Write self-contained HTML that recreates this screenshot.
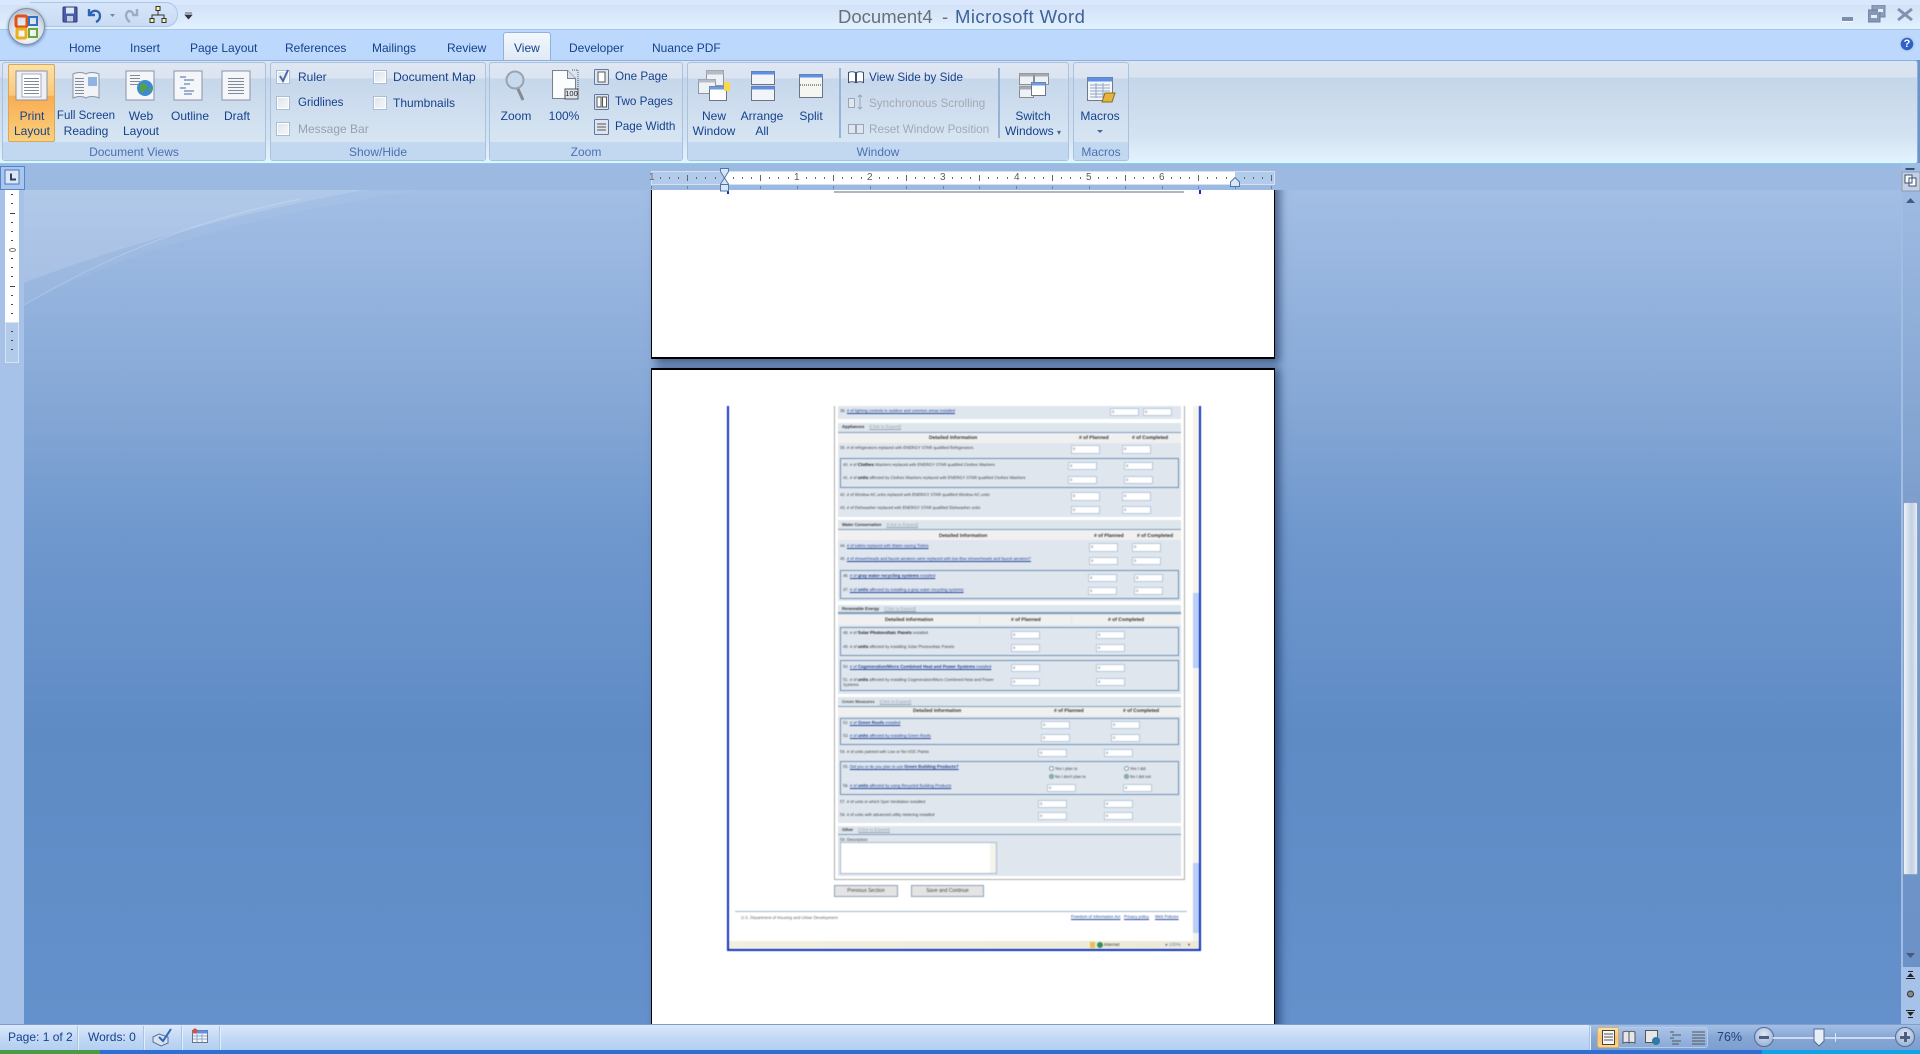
<!DOCTYPE html>
<html><head><meta charset="utf-8"><title>Document4 - Microsoft Word</title>
<style>
html,body{margin:0;padding:0;width:1920px;height:1054px;overflow:hidden;background:#6a93c9}
*{box-sizing:border-box}
body{font-family:"Liberation Sans",sans-serif;position:relative}
.a{position:absolute}
.r{position:absolute;font-size:12px;line-height:14px;color:#15428b;white-space:nowrap}
.c{transform:translateX(-50%);text-align:center}
.d{color:#a3a9b3}
.gl{position:absolute;left:0;right:0;bottom:0;height:18px;background:#c2d8f0;color:#4c6fb0;font-size:12px;line-height:20px;text-align:center;border-radius:0 0 3px 3px}
.g{position:absolute;top:62px;height:99px;border:1px solid #a8c2e0;border-radius:3px;background:linear-gradient(#dee6f2 0,#dbe4f1 15px,#c6d7eb 16px,#d8e6f3 82px)}
.cb{position:absolute;width:14px;height:14px;border:1px solid #a9bdd6;background:linear-gradient(135deg,#dfe4ea,#f6f8fa);box-shadow:inset 0 0 0 1px #fff}
.sep{position:absolute;width:2px;background:#95b3d8}
.f{position:absolute;font-size:4.1px;line-height:6px;color:#444;white-space:nowrap;text-rendering:geometricPrecision}
.f b{color:#222;font-size:4.4px}
.f u{color:#1f4296}
.h{position:absolute;font-size:4.2px;line-height:6px;color:#333;font-weight:bold;white-space:nowrap;text-rendering:geometricPrecision}
.h i{font-style:normal;font-weight:normal;color:#99a2ae;text-decoration:underline;margin-left:4px}
.tt{position:absolute;font-size:5px;line-height:6px;color:#333;font-weight:bold;white-space:nowrap;text-rendering:geometricPrecision}
.i{position:absolute;width:29px;height:8px;background:#fff;border:1px solid #b5c8da;font-size:4px;line-height:6px;color:#555;padding-left:1px}
.s{position:absolute;background:#dfe6ee;left:838px;width:343px}
.sh{position:absolute;left:838px;width:343px;height:10px;background:#dde5ed;border-bottom:1px solid #7f9db9}
.th{position:absolute;left:838px;width:343px;height:10px;background:#f0f0f0}
.bx{position:absolute;left:840px;width:339px;border:1px solid #6f90b4}
.stsep{position:absolute;top:1026px;height:24px;width:1px;background:#a9c3e3;box-shadow:1px 0 0 #e3eefb}
.rd{position:absolute;width:5px;height:5px;border-radius:50%;background:#fff;border:1px solid #7d99ad}
.rd.k{background:#7fc08a}
</style></head><body>

<!-- document background -->
<div class="a" style="left:0;top:190px;width:1920px;height:834px;background:linear-gradient(#a2bee5 0,#86a8d6 25%,#6e97cd 42%,#5f8bc5 65%,#6490cb 100%)"></div>
<svg class="a" style="left:24px;top:190px" width="500" height="130" viewBox="0 0 500 130">
<path d="M0 0H340Q150 35 0 93Z" fill="#fff" opacity=".17"/>
<path d="M0 93Q150 35 340 0H400Q150 35 0 115Z" fill="#fff" opacity=".05"/>
<path d="M0 115Q130 38 276 9" fill="none" stroke="#fff" stroke-width="1" opacity=".2"/>
</svg>
<div class="a" style="left:0;top:190px;width:24px;height:834px;background:#a6c2e9"></div>

<!-- pages -->
<div class="a" style="left:651px;top:180px;width:624px;height:179px;background:#fff;border:1px solid #000;border-width:0 1px 2px 1px;box-shadow:5px 4px 8px rgba(10,30,70,.55)"></div>
<div class="a" style="left:651px;top:368px;width:624px;height:700px;background:#fff;border:1px solid #000;border-top-width:2px;box-shadow:5px 0 8px rgba(10,30,70,.55)"></div>
<div class="a" style="left:727px;top:190px;width:2px;height:4px;background:#1133bb"></div>
<div class="a" style="left:1199px;top:190px;width:2px;height:4px;background:#1133bb"></div>
<div class="a" style="left:834px;top:191px;width:350px;height:2px;background:#aeb6c0"></div>

<!-- embedded screenshot -->
<div class="a" style="left:0;top:0;width:1920px;height:1054px;filter:blur(.4px)">
<div class="a" style="left:727px;top:406px;width:2px;height:545px;background:#1133bb"></div>
<div class="a" style="left:1199px;top:406px;width:2px;height:545px;background:#1133bb"></div>
<div class="a" style="left:727px;top:949px;width:474px;height:2px;background:#1133bb"></div>
<div class="a" style="left:1193px;top:406px;width:6px;height:535px;background:#f4f3ec"></div>
<div class="a" style="left:1193px;top:593px;width:6px;height:75px;background:#b9cff5"></div>
<div class="a" style="left:1193px;top:863px;width:6px;height:70px;background:#b9cff5"></div>
<div class="a" style="left:729px;top:941px;width:470px;height:8px;background:linear-gradient(90deg,#f2efe0,#ece9d8)"></div>
<div class="a" style="left:1090px;top:942px;width:5px;height:6px;background:#e8c050"></div>
<div class="a" style="left:1097px;top:942px;width:6px;height:6px;border-radius:50%;background:#3b8a5a"></div>
<div class="f" style="left:1104px;top:942px;color:#333;font-size:4.600px">Internet</div>
<div class="f" style="left:1165px;top:942px;color:#5a7ab0;font-size:4.600px">&#9679; 100%</div>
<div class="f" style="left:1188px;top:942px;color:#333">&#9662;</div>

<div class="a" style="left:834px;top:406px;width:351px;height:474px;border:1px solid #aaa;border-top:0"></div>

<!-- top sliver -->
<div class="s" style="top:406px;height:13px"></div>
<div class="f" style="left:840px;top:408px">38. <u># of lighting controls in outdoor and common areas installed</u></div>
<div class="i" style="left:1110px;top:408px">0</div><div class="i" style="left:1143px;top:408px">0</div>

<!-- Appliances -->
<div class="s" style="top:423px;height:94px"></div><div class="sh" style="top:423px"></div>
<div class="h" style="left:842px;top:424px">Appliances <i>[Click to Expand]</i></div>
<div class="th" style="top:433px"></div>
<div class="tt" style="left:929px;top:435px">Detailed Information</div>
<div class="tt" style="left:1079px;top:435px"># of Planned</div><div class="tt" style="left:1132px;top:435px"># of Completed</div>
<div class="f" style="left:840px;top:445px">39. # of refrigerators replaced with ENERGY STAR qualified Refrigerators</div>
<div class="i" style="left:1071px;top:445px;height:9px">0</div><div class="i" style="left:1122px;top:445px;height:9px">0</div>
<div class="bx" style="top:458px;height:30px"></div>
<div class="f" style="left:843px;top:462px">40. # of <b>Clothes</b> Washers replaced with ENERGY STAR qualified Clothes Washers</div>
<div class="i" style="left:1068px;top:462px">0</div><div class="i" style="left:1124px;top:462px">0</div>
<div class="f" style="left:843px;top:475px">41. # of <b>units</b> affected by Clothes Washers replaced with ENERGY STAR qualified Clothes Washers</div>
<div class="i" style="left:1068px;top:476px">0</div><div class="i" style="left:1124px;top:476px">0</div>
<div class="f" style="left:840px;top:492px">42. # of Window AC units replaced with ENERGY STAR qualified Window AC units</div>
<div class="i" style="left:1071px;top:492px;height:9px">0</div><div class="i" style="left:1122px;top:492px;height:9px">0</div>
<div class="f" style="left:840px;top:505px">43. # of Dishwasher replaced with ENERGY STAR qualified Dishwasher units</div>
<div class="i" style="left:1071px;top:506px">0</div><div class="i" style="left:1122px;top:506px">0</div>

<!-- Water -->
<div class="s" style="top:520px;height:81px"></div><div class="sh" style="top:520px"></div>
<div class="h" style="left:842px;top:522px">Water Conservation <i>[Click to Expand]</i></div>
<div class="th" style="top:530px"></div>
<div class="tt" style="left:939px;top:533px">Detailed Information</div>
<div class="tt" style="left:1094px;top:533px"># of Planned</div><div class="tt" style="left:1137px;top:533px"># of Completed</div>
<div class="f" style="left:840px;top:543px">44. <u># of toilets replaced with Water-saving Toilets</u></div>
<div class="i" style="left:1089px;top:543px;height:9px">0</div><div class="i" style="left:1132px;top:543px;height:9px">0</div>
<div class="f" style="left:840px;top:556px">45. <u># of showerheads and faucet aerators were replaced with low-flow showerheads and faucet aerators?</u></div>
<div class="i" style="left:1089px;top:557px">0</div><div class="i" style="left:1132px;top:557px">0</div>
<div class="bx" style="top:570px;height:29px"></div>
<div class="f" style="left:843px;top:573px">46. <u># of <b style="color:#1c3f8c">gray water recycling systems</b> installed</u></div>
<div class="i" style="left:1088px;top:574px">0</div><div class="i" style="left:1134px;top:574px">0</div>
<div class="f" style="left:843px;top:587px">47. <u># of <b style="color:#1c3f8c">units</b> affected by installing a gray water recycling systems</u></div>
<div class="i" style="left:1088px;top:587px">0</div><div class="i" style="left:1134px;top:587px">0</div>

<!-- Renewable -->
<div class="s" style="top:605px;height:89px"></div><div class="sh" style="top:605px;height:9px;border-bottom-width:2px"></div>
<div class="h" style="left:842px;top:606px">Renewable Energy <i>[Click to Expand]</i></div>
<div class="th" style="top:615px"></div>
<div class="a" style="left:979px;top:615px;width:1px;height:10px;background:#e4e4e4"></div><div class="a" style="left:1071px;top:615px;width:1px;height:10px;background:#e4e4e4"></div>
<div class="tt" style="left:885px;top:617px">Detailed Information</div>
<div class="tt" style="left:1011px;top:617px"># of Planned</div><div class="tt" style="left:1108px;top:617px"># of Completed</div>
<div class="bx" style="top:627px;height:29px"></div>
<div class="f" style="left:843px;top:630px">48. # of <b>Solar Photovoltaic Panels</b> installed</div>
<div class="i" style="left:1011px;top:631px">0</div><div class="i" style="left:1096px;top:631px">0</div>
<div class="f" style="left:843px;top:644px">49. # of <b>units</b> affected by installing Solar Photovoltaic Panels</div>
<div class="i" style="left:1011px;top:644px">0</div><div class="i" style="left:1096px;top:644px">0</div>
<div class="bx" style="top:660px;height:31px"></div>
<div class="f" style="left:843px;top:664px">50. <u># of <b style="color:#1c3f8c">Cogeneration/Micro Combined Heat and Power Systems</b> installed</u></div>
<div class="i" style="left:1011px;top:664px">0</div><div class="i" style="left:1096px;top:664px">0</div>
<div class="f" style="left:843px;top:677px">51. # of <b>units</b> affected by installing Cogeneration/Micro Combined Heat and Power</div>
<div class="f" style="left:843px;top:682px">Systems</div>
<div class="i" style="left:1011px;top:678px">0</div><div class="i" style="left:1096px;top:678px">0</div>

<!-- Green -->
<div class="s" style="top:697px;height:126px"></div><div class="sh" style="top:697px"></div>
<div class="h" style="left:842px;top:699px;color:#555">Green Measures <i>[Click to Expand]</i></div>
<div class="th" style="top:707px;height:9px"></div>
<div class="tt" style="left:913px;top:708px">Detailed Information</div>
<div class="tt" style="left:1054px;top:708px"># of Planned</div><div class="tt" style="left:1123px;top:708px"># of Completed</div>
<div class="bx" style="top:718px;height:27px"></div>
<div class="f" style="left:843px;top:720px">52. <u># of <b style="color:#1c3f8c">Green Roofs</b> installed</u></div>
<div class="i" style="left:1041px;top:721px">0</div><div class="i" style="left:1111px;top:721px">0</div>
<div class="f" style="left:843px;top:733px">53. <u># of <b style="color:#1c3f8c">units</b> affected by installing Green Roofs</u></div>
<div class="i" style="left:1041px;top:734px">0</div><div class="i" style="left:1111px;top:734px">0</div>
<div class="f" style="left:840px;top:749px">54. # of units painted with Low or No-VOC Paints</div>
<div class="i" style="left:1038px;top:749px">0</div><div class="i" style="left:1104px;top:749px">0</div>
<div class="bx" style="top:761px;height:34px"></div>
<div class="f" style="left:843px;top:764px">55. <u>Did you or do you plan to use <b style="color:#1c3f8c">Green Building Products?</b></u></div>
<div class="rd" style="left:1049px;top:766px"></div><div class="f" style="left:1055px;top:766px">Yes I plan to</div>
<div class="rd k" style="left:1049px;top:774px"></div><div class="f" style="left:1055px;top:774px">No I don't plan to</div>
<div class="rd" style="left:1124px;top:766px"></div><div class="f" style="left:1130px;top:766px">Yes I did</div>
<div class="rd k" style="left:1124px;top:774px"></div><div class="f" style="left:1130px;top:774px">No I did not</div>
<div class="f" style="left:843px;top:783px">56. <u># of <b style="color:#1c3f8c">units</b> affected by using Recycled Building Products</u></div>
<div class="i" style="left:1047px;top:784px">0</div><div class="i" style="left:1123px;top:784px">0</div>
<div class="f" style="left:840px;top:799px">57. # of units in which Spot Ventilation installed</div>
<div class="i" style="left:1038px;top:800px">0</div><div class="i" style="left:1104px;top:800px">0</div>
<div class="f" style="left:840px;top:812px">58. # of units with advanced utility metering installed</div>
<div class="i" style="left:1038px;top:812px">0</div><div class="i" style="left:1104px;top:812px">0</div>

<!-- Other -->
<div class="s" style="top:826px;height:50px"></div><div class="sh" style="top:826px;height:9px"></div>
<div class="h" style="left:842px;top:827px">Other <i>[Click to Expand]</i></div>
<div class="f" style="left:840px;top:837px">59. Description:</div>
<div class="a" style="left:840px;top:842px;width:157px;height:32px;background:#fff;border:1px solid #a8bccc"></div>
<div class="a" style="left:990px;top:843px;width:6px;height:30px;background:#f4f3ec"></div>

<!-- buttons & footer -->
<div class="a" style="left:834px;top:885px;width:64px;height:12px;background:#e4e4e4;border:1px solid #8ba3bb;font-size:5px;line-height:10px;text-align:center;color:#444">Previous Section</div>
<div class="a" style="left:911px;top:885px;width:73px;height:12px;background:#e4e4e4;border:1px solid #8ba3bb;font-size:5px;line-height:10px;text-align:center;color:#444">Save and Continue</div>
<div class="a" style="left:735px;top:911px;width:452px;height:1px;background:#9fb8cc"></div>
<div class="f" style="left:741px;top:915px;color:#666">U.S. Department of Housing and Urban Development</div>
<div class="f" style="left:1071px;top:914px"><u>Freedom of Information Act</u></div>
<div class="f" style="left:1124px;top:914px"><u>Privacy policy</u></div>
<div class="f" style="left:1155px;top:914px"><u>Web Policies</u></div>
</div>

<!-- vertical ruler -->
<svg class="a" style="left:0;top:166px" width="24" height="200" viewBox="0 0 24 200">
<rect x="5" y="24" width="14" height="132" fill="#fff"/>
<rect x="5.5" y="156.5" width="13" height="40" fill="#b3cbeb" stroke="#d7e3f4"/>
<g fill="#444">
<rect x="11" y="28" width="2" height="1"/><rect x="11" y="37" width="2" height="1"/><rect x="10" y="47" width="5" height="1"/><rect x="11" y="56" width="2" height="1"/><rect x="11" y="65" width="2" height="1"/><rect x="11" y="74" width="2" height="1"/><rect x="11" y="92" width="2" height="1"/><rect x="11" y="101" width="2" height="1"/><rect x="11" y="110" width="2" height="1"/><rect x="10" y="120" width="5" height="1"/><rect x="11" y="129" width="2" height="1"/><rect x="11" y="138" width="2" height="1"/><rect x="11" y="147" width="2" height="1"/><rect x="11" y="165" width="2" height="1"/><rect x="11" y="174" width="2" height="1"/><rect x="11" y="183" width="2" height="1"/>
</g>
<ellipse cx="12.5" cy="84" rx="3" ry="1.5" fill="none" stroke="#776" stroke-width="1"/>
</svg>

<!-- right scrollbar -->
<div class="a" style="left:1901px;top:163px;width:19px;height:861px;background:linear-gradient(#a0bde4 0,#7d9ecc 40%,#6f94c8 80%,#6a90c8 100%)"></div>
<div class="a" style="left:1901px;top:190px;width:2px;height:777px;background:#a1bde3"></div>
<div class="a" style="left:1901px;top:967px;width:19px;height:57px;background:#a6c2e9"></div>
<div class="a" style="left:1903px;top:502px;width:15px;height:373px;border:1px solid #8aa4c8;border-radius:2px;background:linear-gradient(90deg,#eef3f9,#cdd9e8 40%,#c3d1e3 60%,#e3eaf3)"></div>
<svg class="a" style="left:1901px;top:163px" width="19" height="30" viewBox="0 0 19 30">
<rect x="4.5" y="5" width="9" height="2" fill="#3c4f73"/>
<rect x="1" y="9" width="18" height="19" fill="#c5d1e2" stroke="#8a9bb5"/>
<path d="M4 12h7v8H4zM8 15h7v8H8z" fill="#fff" stroke="#3c4f73"/></svg>
<svg class="a" style="left:1901px;top:195px" width="19" height="12"><path d="M5 8l4.5-5 4.5 5z" fill="#48597c"/></svg>
<svg class="a" style="left:1901px;top:950px" width="19" height="12"><path d="M5 3l4.5 5 4.5-5z" fill="#48597c"/></svg>
<svg class="a" style="left:1901px;top:969px" width="19" height="52" viewBox="0 0 19 52">
<path d="M7 2h5v1H7zM6 8l3.5-4 3.5 4zM5 9h9v1H5z" fill="#222"/>
<circle cx="9.5" cy="25" r="3" fill="#888" stroke="#333"/>
<path d="M5 41h9v1H5zM6 43l3.5 4 3.5-4zM7 48h5v1H7z" fill="#222"/></svg>

<!-- ruler band -->
<div class="a" style="left:0;top:163px;width:1901px;height:27px;background:#9cb9e1"></div>
<div class="a" style="left:0;top:166px;width:25px;height:24px;background:#a9c6ee;border:1px solid #5a82c9"></div>
<svg class="a" style="left:0;top:166px" width="25" height="24"><rect x="5" y="4" width="14" height="14" fill="#dce7f5" stroke="#4a74c4"/><path d="M10 7.5v7h6v-2h-4v-5z" fill="#2d3f66"/></svg>
<div class="a" style="left:651px;top:171px;width:624px;height:14px;background:#b3cbeb;border:1px solid #d3e1f3"></div>
<div class="a" style="left:724px;top:172px;width:511px;height:12px;background:#fff"></div>
<svg class="a" style="left:651px;top:172px" width="624" height="19" viewBox="0 0 624 19">
<defs><pattern id="p" x="0" y="0" width="73" height="19" patternUnits="userSpaceOnUse">
<g fill="#666"><rect x="9" y="5" width="1" height="2"/><rect x="18" y="5" width="1" height="2"/><rect x="27" y="5" width="1" height="2"/><rect x="36" y="3" width="1" height="6"/><rect x="45" y="5" width="1" height="2"/><rect x="54" y="5" width="1" height="2"/><rect x="64" y="5" width="1" height="2"/>
<rect x="36" y="14" width="1" height="3" fill="#6f84a3"/><rect x="0" y="14" width="1" height="3" fill="#6f84a3"/></g></pattern></defs>
<rect x="0" width="624" height="19" fill="url(#p)"/></svg>
<div class="a" style="left:649px;top:172px;width:6px;font-size:10px;line-height:12px;color:#666">1</div>
<div class="a" style="left:794px;top:172px;font-size:10px;line-height:12px;color:#5a5a5a">1</div>
<div class="a" style="left:867px;top:172px;font-size:10px;line-height:12px;color:#5a5a5a">2</div>
<div class="a" style="left:940px;top:172px;font-size:10px;line-height:12px;color:#5a5a5a">3</div>
<div class="a" style="left:1014px;top:172px;font-size:10px;line-height:12px;color:#5a5a5a">4</div>
<div class="a" style="left:1086px;top:172px;font-size:10px;line-height:12px;color:#5a5a5a">5</div>
<div class="a" style="left:1159px;top:172px;font-size:10px;line-height:12px;color:#5a5a5a">6</div>
<svg class="a" style="left:719px;top:168px" width="11" height="24" viewBox="0 0 11 24">
<path d="M1.5.5h8v3L5.5 10l-4-6.500z" fill="#dbe6f5" stroke="#4f77ad"/>
<path d="M5.500 10l4 6v7h-8v-7z" fill="#dbe6f5" stroke="#4f77ad"/><path d="M1.500 16.500h8" stroke="#4f77ad"/></svg>
<svg class="a" style="left:1230px;top:177px" width="10" height="10"><path d="M.5 9.500V5L5 .5 9.500 5v4.500z" fill="#dbe6f5" stroke="#4f77ad"/></svg>

<!-- title bar -->
<div class="a" style="left:0;top:0;width:1920px;height:30px;background:linear-gradient(#d9e8fc 0,#d9e8fc 5px,#d2e1f7 5px,#e2f1fe 29px);border-bottom:1px solid #a7c6ea"></div>
<div class="a" style="left:30px;top:2px;width:148px;height:25px;border-radius:0 12px 12px 0;background:linear-gradient(#d6e5f9,#c9dbf3);border:1px solid #a9c5e8;border-left:0"></div>
<div class="a" style="left:838px;top:5px;font-size:18.5px;line-height:24px;color:#6b6f78;white-space:nowrap">Document4</div>
<div class="a" style="left:942px;top:5px;font-size:18.5px;line-height:24px;color:#6b6f78">-</div>
<div class="a" style="left:955px;top:5px;font-size:18.5px;line-height:24px;color:#3f6298;white-space:nowrap;letter-spacing:.45px">Microsoft Word</div>
<!-- qat icons -->
<svg class="a" style="left:60px;top:4px" width="135" height="22" viewBox="0 0 135 22">
<rect x="3" y="3" width="14" height="15" rx="1" fill="#4a5ea8" stroke="#2b3a7a"/><rect x="6" y="3.500" width="8" height="6" fill="#dfe8f7"/><rect x="7" y="12" width="6" height="5.500" fill="#c6cde0"/>
<path d="M29 5v6h6M30 10c3-5 10-4 10 2 0 3-2 5-4 6" fill="none" stroke="#2f63b5" stroke-width="2.400"/>
<path d="M50 10h5l-2.500 3z" fill="#6f87a8"/>
<path d="M77 5v6h-5M73 10c-1-4 -6-4-7 1 0 3 2 6 4 7" fill="none" stroke="#9aadc4" stroke-width="2.400"/>
<path d="M92 14v-3h12v3M98 7v4" fill="none" stroke="#333"/><rect x="96" y="2.500" width="4" height="4" fill="#fdf6a0" stroke="#333"/><rect x="90" y="14.500" width="4" height="4" fill="#fdf6a0" stroke="#333"/><rect x="102" y="14.500" width="4" height="4" fill="#fdf6a0" stroke="#333"/>
<path d="M125 9h7M125 11h7l-3.500 4z" fill="#334" stroke="#334" stroke-width=".7"/></svg>
<!-- window controls -->
<div class="a" style="left:1842px;top:17px;width:11px;height:5px;background:#7a8eae;border-bottom:1px solid #fff"></div>
<svg class="a" style="left:1868px;top:5px" width="18" height="18"><rect x="4" y="0" width="13" height="12" fill="#8c9fbb" stroke="#74889f"/><rect x="0" y="5" width="12" height="12" fill="#8498b6" stroke="#6d819e"/><rect x="3" y="10" width="6" height="3" fill="#e4effc"/><rect x="10" y="4" width="5" height="3" fill="#e4effc"/></svg>
<svg class="a" style="left:1896px;top:8px" width="18" height="14"><path d="M2 1l14 11M16 1L2 12" stroke="#8093b0" stroke-width="3"/></svg>

<!-- tab row -->
<div class="a" style="left:0;top:30px;width:1920px;height:30px;background:#bcd8fd"></div>
<div class="a" style="left:503px;top:32px;width:48px;height:29px;border:1px solid #8db2e3;border-bottom:0;border-radius:3px 3px 0 0;background:linear-gradient(#f3f8fe,#dfe9f5)"></div>
<div class="r" style="left:69px;top:41px">Home</div>
<div class="r" style="left:130px;top:41px">Insert</div>
<div class="r" style="left:190px;top:41px">Page Layout</div>
<div class="r" style="left:285px;top:41px">References</div>
<div class="r" style="left:372px;top:41px">Mailings</div>
<div class="r" style="left:447px;top:41px">Review</div>
<div class="r" style="left:514px;top:41px">View</div>
<div class="r" style="left:569px;top:41px">Developer</div>
<div class="r" style="left:652px;top:41px">Nuance PDF</div>
<svg class="a" style="left:1899px;top:36px" width="16" height="16"><circle cx="8" cy="8" r="7" fill="#2c62c8" stroke="#b9cdea" stroke-width="1.500"/></svg>
<div class="a" style="left:1899px;top:36px;width:16px;text-align:center;font-size:11px;line-height:16px;font-weight:bold;color:#fff">?</div>

<!-- office button -->
<div class="a" style="left:8px;top:8px;width:37px;height:37px;border-radius:50%;background:radial-gradient(circle at 50% 70%,#fff,#d7dee8 55%,#9aa7b8 100%);border:1px solid #7e8ea5;box-shadow:0 1px 3px rgba(40,70,120,.6)"></div>
<svg class="a" style="left:14px;top:14px" width="26" height="26" viewBox="0 0 26 26">
<rect x="2" y="2" width="11" height="11" rx="2" fill="none" stroke="#e0521b" stroke-width="3"/><rect x="15" y="3" width="8" height="8" fill="none" stroke="#2e73c9" stroke-width="2"/>
<rect x="3" y="15" width="9" height="9" rx="1" fill="none" stroke="#edae1c" stroke-width="3"/><rect x="15" y="15" width="8" height="8" fill="none" stroke="#6aa83a" stroke-width="2"/></svg>

<!-- ribbon -->
<div class="a" style="left:0;top:60px;width:1918px;height:104px;border:1px solid #8dafdc;border-width:1px 1px 1px 0;border-bottom-color:#7fd0ea;border-radius:0 3px 3px 0;background:linear-gradient(#dbe4f1 0,#d9e2ef 16px,#c5d6ea 17px,#d4e3f1 75%,#e3f4fe 100%)"></div>

<div class="g" style="left:2px;width:264px"><div class="gl">Document Views</div></div>
<div class="g" style="left:270px;width:216px"><div class="gl">Show/Hide</div></div>
<div class="g" style="left:489px;width:194px"><div class="gl">Zoom</div></div>
<div class="g" style="left:687px;width:382px"><div class="gl">Window</div></div>
<div class="g" style="left:1073px;width:56px"><div class="gl">Macros</div></div>

<!-- print layout active -->
<div class="a" style="left:8px;top:64px;width:47px;height:78px;border:1px solid #d5a958;border-radius:2px;background:linear-gradient(#fde1a8 0,#fcc778 40%,#f9ac52 41%,#fbd07c 100%)"></div>
<svg class="a" style="left:0;top:66px" width="270" height="36" viewBox="0 0 270 36">
<defs><pattern id="l" width="10" height="3" patternUnits="userSpaceOnUse"><rect width="10" height="1" fill="#7f8a9a"/></pattern></defs>
<rect x="16" y="5" width="31" height="29" fill="#edf0f5" stroke="#8a94a4"/><rect x="22" y="8" width="19" height="23" fill="#fff" stroke="#aab"/><rect x="24" y="11" width="15" height="18" fill="url(#l)"/>
<path d="M73 8c4-2 10-2 13 0 3-2 9-2 13 0v24c-4-2-10-2-13 0-3-2-9-2-13 0z" fill="#f1f3f6" stroke="#8a94a4"/><rect x="75" y="11" width="9" height="18" fill="url(#l)"/><rect x="88" y="11" width="9" height="9" fill="#8fb4e0"/>
<rect x="126" y="5" width="28" height="29" fill="#f4f6fa" stroke="#8a94a4"/><rect x="130" y="9" width="10" height="12" fill="url(#l)"/><circle cx="145" cy="22" r="8" fill="#3c8ad2"/><path d="M140 19c3-3 6-2 7 1s-3 4-4 7c-3-2-4-5-3-8zM148 22l4 0-2 5z" fill="#58a043"/>
<rect x="174" y="5" width="28" height="29" fill="#f4f6fa" stroke="#8a94a4"/><path d="M180 11h6M184 14h10M184 18h6M180 22h6M184 25h10M184 28h8" stroke="#43689f"/>
<rect x="222" y="5" width="28" height="29" fill="#f4f6fa" stroke="#8a94a4"/><rect x="228" y="10" width="16" height="19" fill="url(#l)"/>
</svg>
<div class="r c" style="left:32px;top:109px">Print</div><div class="r c" style="left:32px;top:124px">Layout</div>
<div class="r c" style="left:86px;top:109px;font-size:11.5px">Full Screen</div><div class="r c" style="left:86px;top:124px">Reading</div>
<div class="r c" style="left:141px;top:109px">Web</div><div class="r c" style="left:141px;top:124px">Layout</div>
<div class="r c" style="left:190px;top:109px">Outline</div>
<div class="r c" style="left:237px;top:109px">Draft</div>

<!-- show/hide -->
<div class="cb" style="left:276px;top:70px"></div>
<svg class="a" style="left:277px;top:68px" width="14" height="15"><path d="M3 8l3 5 5-11" fill="none" stroke="#4a6aa8" stroke-width="2"/></svg>
<div class="r" style="left:298px;top:70px">Ruler</div>
<div class="cb" style="left:276px;top:96px"></div><div class="r" style="left:298px;top:96px;font-size:11.5px">Gridlines</div>
<div class="cb" style="left:276px;top:122px"></div><div class="r d" style="left:298px;top:122px;color:#9aa0aa">Message Bar</div>
<div class="cb" style="left:373px;top:70px"></div><div class="r" style="left:393px;top:70px;font-size:12.2px">Document Map</div>
<div class="cb" style="left:373px;top:96px"></div><div class="r" style="left:393px;top:96px">Thumbnails</div>

<!-- zoom -->
<svg class="a" style="left:500px;top:68px" width="34" height="34" viewBox="0 0 34 34">
<circle cx="15" cy="12" r="8.500" fill="#c5d9ef" stroke="#9aa3ae" stroke-width="2"/><path d="M18 21l5 11" stroke="#858a92" stroke-width="3"/></svg>
<svg class="a" style="left:550px;top:68px" width="30" height="34" viewBox="0 0 30 34">
<path d="M2.500 2.500h15l8 8v20h-23z" fill="#fbfcfe" stroke="#77808f"/><path d="M17.500 2.500v8h8" fill="#dde" stroke="#77808f"/><path d="M22 2h6v27" fill="none" stroke="#555" stroke-dasharray="1 1"/>
<rect x="15" y="21" width="13" height="10" fill="#dfe6ef" stroke="#555"/></svg>
<div class="a" style="left:565px;top:89px;width:13px;font-size:7.500px;line-height:9px;color:#222;text-align:center">100</div>
<div class="r c" style="left:516px;top:109px">Zoom</div>
<div class="r c" style="left:564px;top:109px">100%</div>
<svg class="a" style="left:593px;top:68px" width="18" height="68" viewBox="0 0 18 68">
<rect x="1.500" y="1.500" width="14" height="15" rx="1" fill="#dfe6f0" stroke="#5f789e"/><rect x="5" y="4" width="7" height="10" fill="#fff" stroke="#555"/>
<rect x="1.500" y="26.500" width="14" height="15" rx="1" fill="#dfe6f0" stroke="#5f789e"/><rect x="4" y="29" width="4" height="10" fill="#fff" stroke="#555"/><rect x="9.500" y="29" width="4" height="10" fill="#fff" stroke="#555"/>
<rect x="1.500" y="51.500" width="14" height="15" rx="1" fill="#dfe6f0" stroke="#5f789e"/><path d="M4 56h9M4 59h9M4 62h9" stroke="#555"/></svg>
<div class="r" style="left:615px;top:70px;font-size:11.7px">One Page</div>
<div class="r" style="left:615px;top:95px;font-size:11.7px">Two Pages</div>
<div class="r" style="left:615px;top:120px;font-size:11.7px">Page Width</div>

<!-- window -->
<svg class="a" style="left:696px;top:68px" width="130" height="36" viewBox="0 0 130 36">
<rect x="10.500" y="2.500" width="17" height="15" fill="#eef1f5" stroke="#8d95a1"/><rect x="10.500" y="2.500" width="17" height="4" fill="#b6bcc6"/>
<rect x="2.500" y="11.500" width="17" height="14" fill="#eef1f5" stroke="#8d95a1"/><rect x="2.500" y="11.500" width="17" height="3" fill="#b6bcc6"/>
<rect x="13.500" y="18.500" width="17" height="14" fill="#fff" stroke="#6b7586"/><rect x="13.500" y="18.500" width="17" height="3" fill="#6f9be0"/>
<path d="M28 14l6 0 0 9-6 0z" fill="#fbd84a"/>
<rect x="55.500" y="3.500" width="23" height="13" fill="#f1f4f8" stroke="#6b7586"/><rect x="55.500" y="3.500" width="23" height="3" fill="#5f8fe2"/>
<rect x="55.500" y="18.500" width="23" height="14" fill="#f1f4f8" stroke="#6b7586"/><rect x="55.500" y="18.500" width="23" height="3" fill="#5f8fe2"/>
<rect x="103.500" y="6.500" width="23" height="23" fill="#f5f6f2" stroke="#6b7586"/><rect x="103.500" y="6.500" width="23" height="3" fill="#5f8fe2"/><path d="M104 17h22" stroke="#333" stroke-dasharray="1 1"/>
</svg>
<div class="r c" style="left:714px;top:109px">New</div><div class="r c" style="left:714px;top:124px">Window</div>
<div class="r c" style="left:762px;top:109px">Arrange</div><div class="r c" style="left:762px;top:124px">All</div>
<div class="r c" style="left:811px;top:109px">Split</div>
<div class="sep" style="left:839px;top:68px;height:70px"></div>
<div class="sep" style="left:998px;top:68px;height:70px"></div>
<svg class="a" style="left:847px;top:70px" width="18" height="68" viewBox="0 0 18 68">
<path d="M1.500 2.500c2-1 5-1 7 0v10c-2-1-5-1-7 0zM9.500 2.500c2-1 5-1 7 0v10c-2-1-5-1-7 0z" fill="#fff" stroke="#3c4f73"/>
<path d="M1.500 28.500h6v9h-6z" fill="#dfe6f0" stroke="#9aa6b8"/><path d="M13 25v14M11 27l2-2 2 2M11 37l2 2 2-2" fill="none" stroke="#9aa6b8"/>
<path d="M1.500 54.500h7v9h-7zM9.500 54.500h7v9h-7z" fill="#dfe6f0" stroke="#9aa6b8"/></svg>
<div class="r" style="left:869px;top:71px;font-size:11.7px">View Side by Side</div>
<div class="r d" style="left:869px;top:97px;font-size:11.7px">Synchronous Scrolling</div>
<div class="r d" style="left:869px;top:123px;font-size:11.7px">Reset Window Position</div>
<svg class="a" style="left:1017px;top:70px" width="34" height="32" viewBox="0 0 34 32">
<rect x="2.500" y="3.500" width="14" height="11" fill="#eef1f5" stroke="#8d8d8d"/><rect x="2.500" y="3.500" width="14" height="3" fill="#a5a9b0"/>
<rect x="17.500" y="3.500" width="14" height="11" fill="#eef1f5" stroke="#8d8d8d"/><rect x="17.500" y="3.500" width="14" height="3" fill="#a5a9b0"/>
<rect x="2.500" y="16.500" width="14" height="11" fill="#eef1f5" stroke="#8d8d8d"/><rect x="2.500" y="16.500" width="14" height="3" fill="#a5a9b0"/>
<rect x="14.500" y="12.500" width="14" height="13" fill="#fff" stroke="#6b7586"/><rect x="14.500" y="12.500" width="14" height="3" fill="#6f9be0"/></svg>
<div class="r c" style="left:1033px;top:109px">Switch</div><div class="r c" style="left:1033px;top:124px">Windows <span style="font-size:8px;color:#4d668f">&#9662;</span></div>

<!-- macros -->
<svg class="a" style="left:1085px;top:75px" width="34" height="30" viewBox="0 0 34 30">
<rect x="2.500" y="2.500" width="25" height="23" fill="#f4f6fa" stroke="#717a8a"/><rect x="2.500" y="2.500" width="25" height="4" fill="#5f8fe2"/>
<path d="M5 10h20M5 13h20M5 16h20M5 19h20M5 22h20M11 8v15M18 8v15" stroke="#8fa7c8"/>
<path d="M20 18h10l-3 9H17z" fill="#e3b53c" stroke="#8e6a1a"/></svg>
<div class="r c" style="left:1100px;top:109px">Macros</div>
<div class="a" style="left:1097px;top:130px;border:3px solid transparent;border-top:3px solid #4d668f"></div>

<!-- status bar -->
<div class="a" style="left:0;top:1024px;width:1920px;height:26px;background:linear-gradient(#dbe9fb,#c3d9f5 50%,#b4cff1);border-top:1px solid #7e9fce"></div>
<div class="a" style="left:1589px;top:1024px;width:331px;height:26px;background:linear-gradient(#a3bfe6,#86a6d4 50%,#7e9ecf);border-top:1px solid #7e9fce"></div>
<div class="a" style="left:0;top:1050px;width:1762px;height:4px;background:#2e6fd6"></div>
<div class="a" style="left:1762px;top:1050px;width:158px;height:4px;background:#0ea4ea"></div>
<div class="a" style="left:0;top:1050px;width:100px;height:4px;background:#4a9a4a"></div>
<div class="r" style="left:8px;top:1030px">Page: 1 of 2</div>
<div class="stsep" style="left:77px"></div>
<div class="r" style="left:88px;top:1030px">Words: 0</div>
<div class="stsep" style="left:143px"></div>
<svg class="a" style="left:152px;top:1027px" width="22" height="20" viewBox="0 0 22 20"><path d="M1 10l6-3 9 3v6l-7 3-8-4z" fill="#d9e2ef" stroke="#5a6f95"/><path d="M7 10l4 4 8-12" fill="none" stroke="#3166b8" stroke-width="2"/></svg>
<div class="stsep" style="left:181px"></div>
<svg class="a" style="left:191px;top:1028px" width="18" height="16" viewBox="0 0 18 16"><rect x="1.500" y="2.500" width="15" height="12" fill="#f4f6fa" stroke="#6b7586"/><rect x="1.500" y="2.500" width="15" height="3" fill="#5f8fe2"/><path d="M2 8h14M2 11h14M6 6v8M11 6v8" stroke="#8fa7c8"/><circle cx="4" cy="3" r="2.500" fill="#d9503f"/></svg>
<div class="stsep" style="left:219px"></div>
<div class="stsep" style="left:1589px"></div>
<div class="a" style="left:1597px;top:1027px;width:111px;height:21px;border:1px solid #b5cbe8;border-radius:3px;background:linear-gradient(#a9c3e8,#8aaad8)"></div>
<div class="a" style="left:1597px;top:1027px;width:22px;height:21px;border:1px solid #d5b070;border-radius:3px 0 0 3px;background:linear-gradient(#fde0a4,#fcc36e 50%,#fad487)"></div>
<svg class="a" style="left:1600px;top:1029px" width="106" height="17" viewBox="0 0 106 17">
<rect x="2.500" y="1.500" width="12" height="14" fill="#f6f6f6" stroke="#444"/><path d="M4 5h9M4 8h9M4 11h9" stroke="#555"/>
<path d="M23 3c3-1 5-1 6 0 1-1 3-1 6 0v11c-3-1-5-1-6 0-1-1-3-1-6 0z" fill="#e6e7ea" stroke="#555"/><path d="M29 3v11" stroke="#555"/>
<rect x="45.500" y="1.500" width="12" height="12" fill="#e6e7ea" stroke="#555"/><circle cx="56" cy="12" r="4" fill="#2f7ba6"/>
<path d="M70 3h4M72 6h9M70 9h4M72 12h9M72 15h7" stroke="#555"/>
<path d="M92 3h13M92 6h13M92 9h13M92 12h13M92 15h13" stroke="#555"/></svg>
<div class="a" style="left:1717px;top:1029px;font-size:12.5px;line-height:16px;color:#22407c">76%</div>
<div class="a" style="left:1754px;top:1027px;width:20px;height:20px;border-radius:50%;background:radial-gradient(circle at 50% 35%,#dfe8f5,#8aa5cc);border:1px solid #4f6c99"></div>
<div class="a" style="left:1759px;top:1036px;width:10px;height:3px;background:#4d5f80"></div>
<div class="a" style="left:1773px;top:1037px;width:122px;height:2px;background:#cfdcf0"></div>
<div class="a" style="left:1835px;top:1033px;width:1px;height:9px;background:#dbe5f3"></div>
<svg class="a" style="left:1813px;top:1028px" width="12" height="20"><path d="M1 1h10v12l-5 5-5-5z" fill="#e8eef7" stroke="#4f6c99"/></svg>
<div class="a" style="left:1895px;top:1027px;width:20px;height:20px;border-radius:50%;background:radial-gradient(circle at 50% 35%,#dfe8f5,#8aa5cc);border:1px solid #4f6c99"></div>
<div class="a" style="left:1900px;top:1036px;width:10px;height:3px;background:#4d5f80"></div>
<div class="a" style="left:1903.500px;top:1032px;width:3px;height:10px;background:#4d5f80"></div>
</body></html>
